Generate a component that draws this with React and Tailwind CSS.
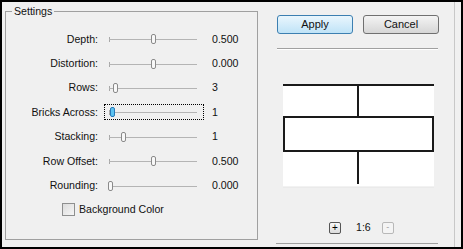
import { useState } from "react";

const settings = [
  { label: "Depth:", thumb: 47, value: "0.500" },
  { label: "Distortion:", thumb: 47, value: "0.000" },
  { label: "Rows:", thumb: 9, value: "3" },
  { label: "Bricks Across:", thumb: 6, value: "1", focused: true },
  { label: "Stacking:", thumb: 17, value: "1" },
  { label: "Row Offset:", thumb: 47, value: "0.500" },
  { label: "Rounding:", thumb: 4, value: "0.000" },
];

const Slider = ({ thumb, focused }) => (
  <div
    className={
      "relative ml-[6px] h-[16px] w-[100px] " +
      (focused ? "border border-dotted border-black" : "border border-transparent")
    }
  >
    <div className="absolute left-[4px] top-[5px] h-[5px] w-px bg-[#a8a8a8]" />
    <div className="absolute left-[4px] top-[7px] h-px w-[88px] bg-[#b4b4b4]" />
    <div
      className={
        "absolute top-[2px] h-[10px] w-[5px] rounded-[2px] border " +
        (focused
          ? "border-[#2a7ab8] bg-[#5cc2f0]"
          : "border-[#8a8a8a] bg-[#f8f8f8]")
      }
      style={{ left: thumb - 1 }}
    />
  </div>
);

const BrickPreview = () => (
  <svg width="151" height="104" viewBox="0 0 151 104" className="block">
    <rect x="0" y="0" width="151" height="103" fill="#ffffff" />
    <line x1="0" y1="1" x2="151" y2="1" stroke="#1a1a1a" strokeWidth="2" />
    <line x1="75" y1="0" x2="75" y2="34" stroke="#1a1a1a" strokeWidth="2" />
    <rect x="1" y="33" width="149" height="34" fill="none" stroke="#1a1a1a" strokeWidth="2" />
    <line x1="75" y1="67" x2="75" y2="100" stroke="#1a1a1a" strokeWidth="2" />
    <line x1="0" y1="103" x2="151" y2="103" stroke="#e4e4e4" strokeWidth="1" />
  </svg>
);

export default function App() {
  const [bgColor, setBgColor] = useState(false);

  return (
    <div className="flex h-[249px] w-[463px] border-2 border-black bg-[#f0f0f0] font-['Liberation_Sans',Arial,sans-serif] text-[10.6px] leading-[13px] text-[#111]">
      <fieldset className="ml-[3px] mt-[3px] h-[235px] w-[253px] border border-[#a0a0a0]">
        <legend className="ml-[6px] px-[2px] text-[#111]">Settings</legend>
        <div className="flex flex-col pt-[9px]">
          {settings.map((row) => (
            <div key={row.label} className="flex h-[24.4px] items-center">
              <span className="w-[92px] text-right">{row.label}</span>
              <Slider thumb={row.thumb} focused={row.focused} />
              <span className="ml-[8px]">{row.value}</span>
            </div>
          ))}
          <label className="flex h-[24.4px] items-center pl-[56px]">
            <input
              type="checkbox"
              checked={bgColor}
              onChange={(e) => setBgColor(e.target.checked)}
              className="h-[13px] w-[13px] appearance-none border border-[#8e8f8f] bg-gradient-to-br from-[#dcdcdc] to-[#f6f6f6]"
            />
            <span className="ml-[4px]">Background Color</span>
          </label>
        </div>
      </fieldset>

      <div className="ml-px flex w-[196px] flex-col border-r border-[#c8c8c8]">
        <div className="mt-[13px] flex gap-[10px] pl-[18px]">
          <button className="h-[19px] w-[76px] rounded-[3px] border border-[#3c7fb1] bg-gradient-to-b from-[#eaf6fd] to-[#bfe3f7] text-[11px] text-[#111]">
            Apply
          </button>
          <button className="h-[19px] w-[76px] rounded-[3px] border border-[#707070] bg-gradient-to-b from-[#f4f4f4] to-[#d6d6d6] text-[11px] text-[#111]">
            Cancel
          </button>
        </div>
        <div className="ml-[18px] mt-[14px] h-[2px] w-[161px] border-t border-b border-t-[#a0a0a0] border-b-white" />
        <div className="ml-[24px] mt-[34px]">
          <BrickPreview />
        </div>
        <div className="mt-[33px] flex items-center pl-[70px]">
          <button className="flex h-[12px] w-[12px] items-center justify-center rounded-[2px] border border-[#555] bg-gradient-to-b from-[#f8f8f8] to-[#dcdcdc] text-[10px] leading-none text-black">
            +
          </button>
          <span className="ml-[15px]">1:6</span>
          <button
            disabled
            className="ml-[11px] flex h-[12px] w-[12px] items-center justify-center rounded-[2px] border border-[#b8b8b8] bg-[#f4f4f4] text-[9px] leading-none text-[#a0a0a0]"
          >
            -
          </button>
        </div>
        <div className="ml-[17px] mt-auto mb-[3px] h-px w-[162px] bg-[#a0a0a0]" />
      </div>
    </div>
  );
}
